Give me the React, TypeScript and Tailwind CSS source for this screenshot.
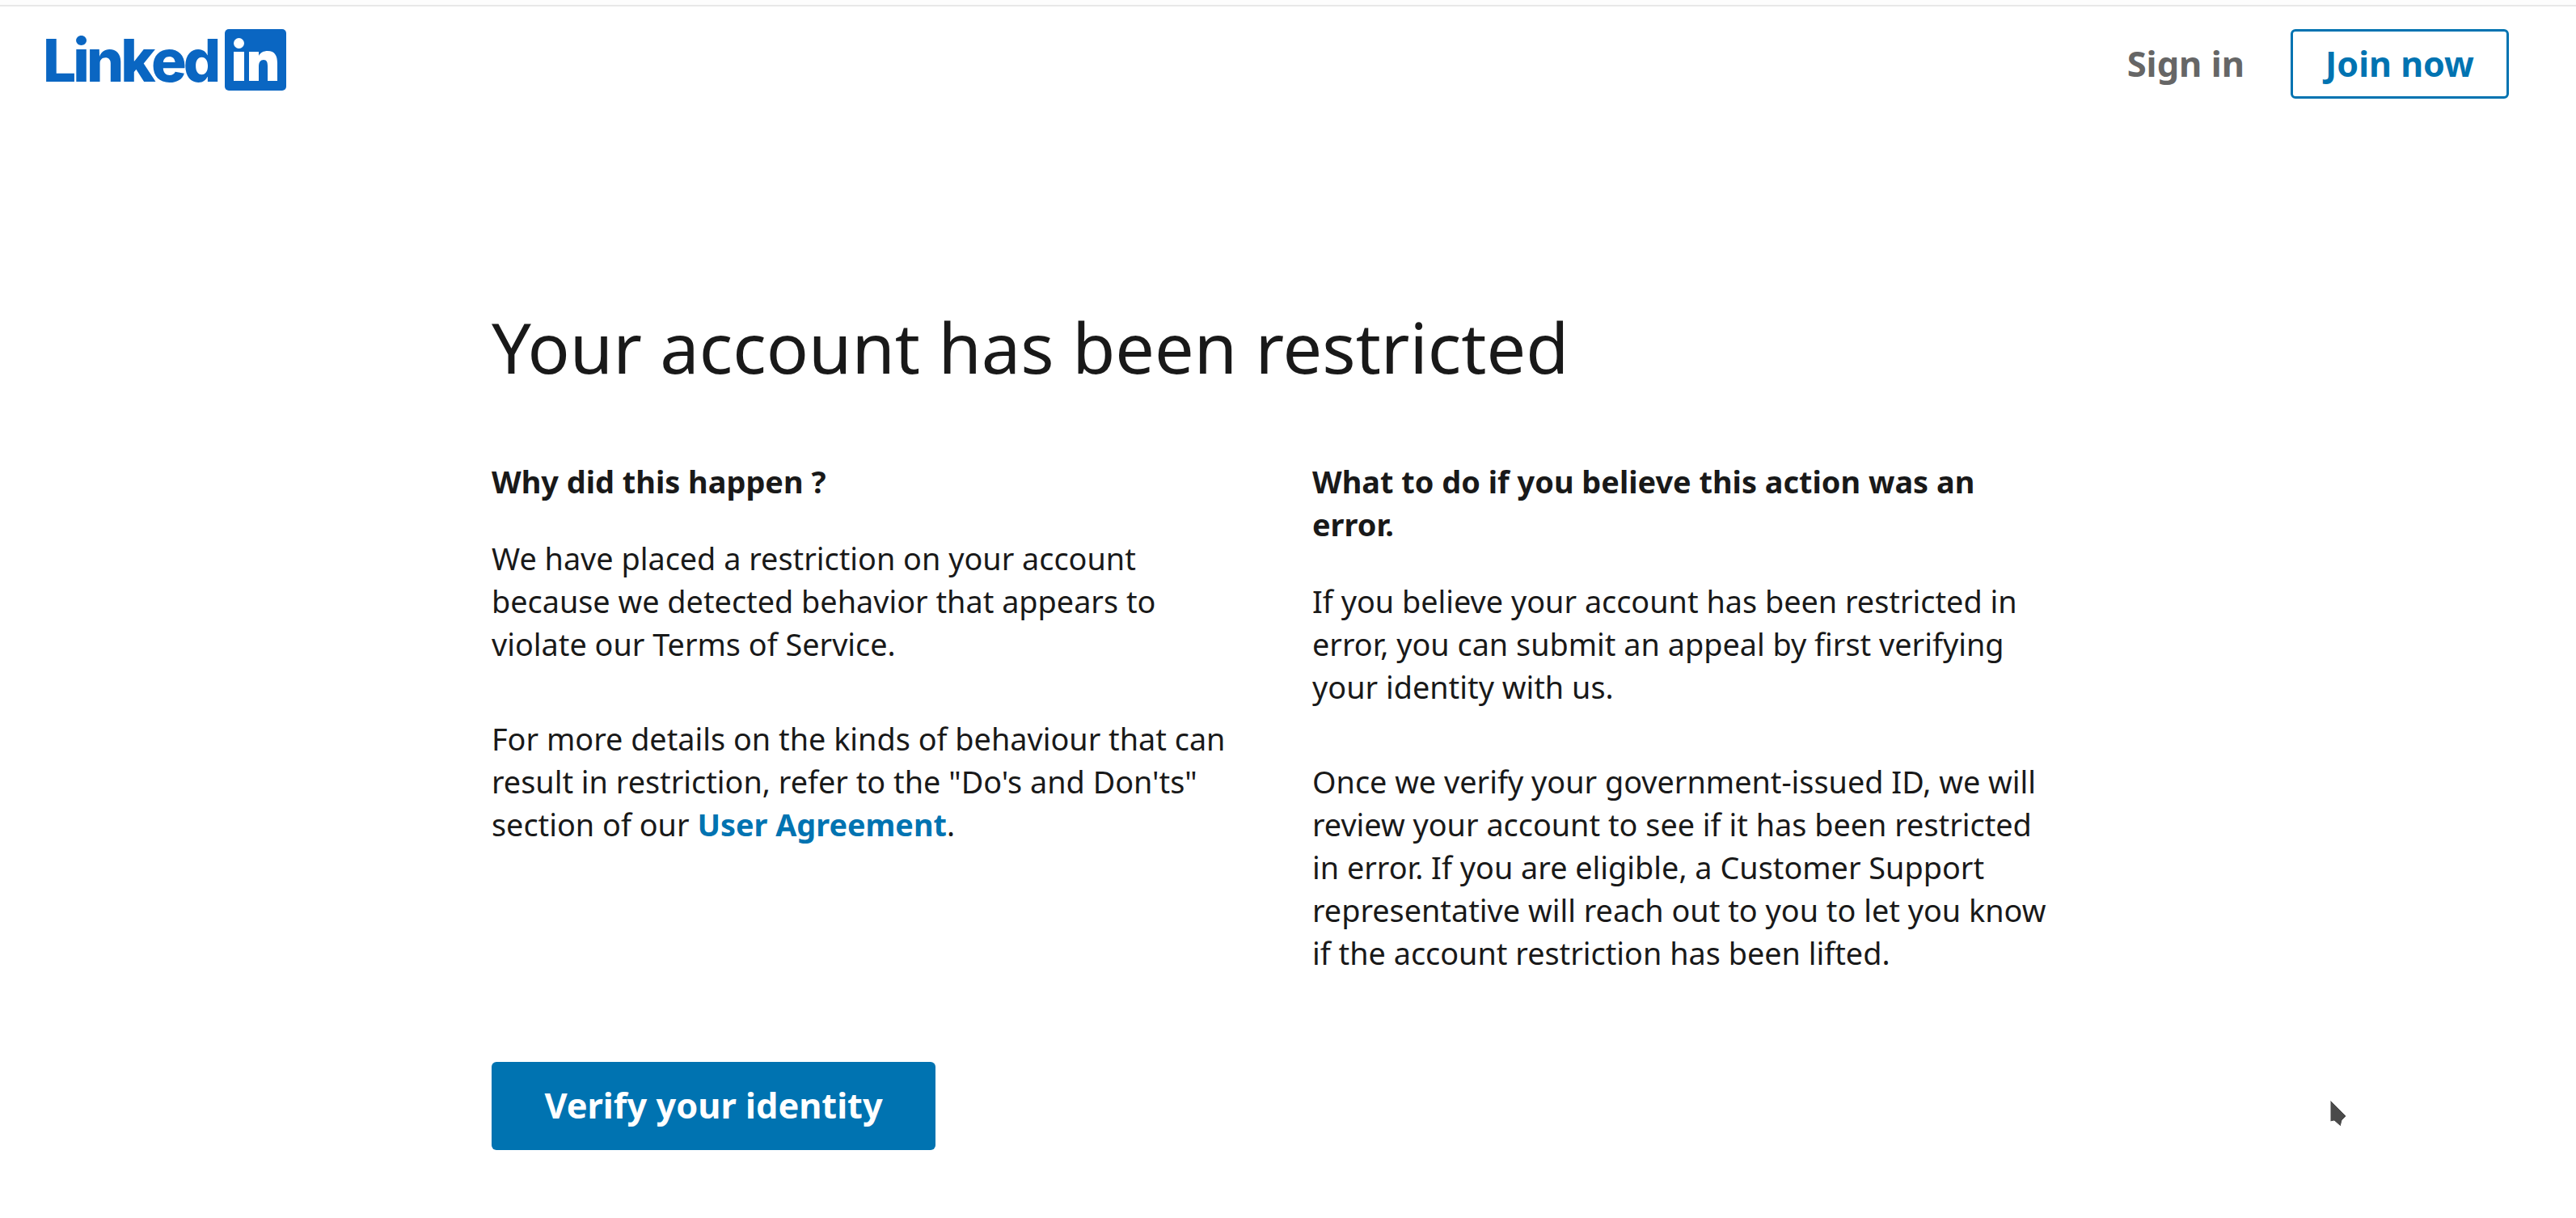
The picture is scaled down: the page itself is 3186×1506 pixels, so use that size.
const font = "font-['Noto_Sans','Open_Sans',sans-serif]";

function Logo() {
  return (
    <div className="flex items-center">
      <span className="font-['Inter',sans-serif] text-[73px] leading-[75px] font-extrabold tracking-[-4px] text-[#0a66c2]">
        Linked
      </span>
      <svg viewBox="0 0 76 76" className="ml-[9px] h-[76px] w-[76px]">
        <rect width="76" height="76" rx="5" fill="#0a66c2" />
        <rect x="11" y="28" width="13" height="36" fill="#fff" />
        <circle cx="17.5" cy="17.5" r="6.5" fill="#fff" />
        <path
          d="M30 28h12v5c2-4 6-6 11-6 9 0 12 6 12 15v22H53V46c0-5-1-8-5-8s-6 3-6 8v18H30z"
          fill="#fff"
        />
      </svg>
    </div>
  );
}

function Cursor() {
  return (
    <svg viewBox="0 0 28 42" className="absolute left-[2878px] top-[1356px] h-[42px] w-[28px]">
      <path d="M4 4L24 24L19 29L17 37L9 30L4 31z" fill="#4a4a4a" stroke="#fff" strokeWidth="1" />
    </svg>
  );
}

export default function App() {
  return (
    <div className={`relative min-h-[1506px] bg-white ${font} text-[#191919]`}>
      <div className="h-[8px] border-b-2 border-[#e8e8e8] bg-[#fdfdfd]" />
      <header className="flex items-start justify-between pl-[53px] pr-[83px] pt-[28px]">
        <Logo />
        <div className="flex items-center gap-[57px]">
          <a className="text-[43.5px] font-bold text-[#666666]">Sign in</a>
          <a className="flex h-[86px] w-[270px] items-center justify-center rounded-[6px] border-[3px] border-[#0073b1] text-[43px] font-bold text-[#0073b1]">
            Join now
          </a>
        </div>
      </header>
      <main className="pl-[608px] pt-[247px]">
        <h1 className="text-[86.4px] leading-[120px] font-normal">Your account has been restricted</h1>
        <div className="mt-[80px] grid w-[1940px] grid-cols-[925px_925px] gap-x-[90px] text-[37.8px] leading-[53px]">
          <section>
            <h2 className="text-[37.9px] font-bold">Why did this happen ?</h2>
            <p className="mt-[42px]">
              We have placed a restriction on your account because we detected behavior that appears to violate our Terms of Service.
            </p>
            <p className="mt-[64px]">
              For more details on the kinds of behaviour that can result in restriction, refer to the "Do's and Don'ts" section of our{" "}
              <a className="font-bold text-[#0073b1]">User Agreement</a>.
            </p>
          </section>
          <section>
            <h2 className="text-[37.9px] font-bold">What to do if you believe this action was an error.</h2>
            <p className="mt-[42px]">
              If you believe your account has been restricted in error, you can submit an appeal by first verifying your identity with us.
            </p>
            <p className="mt-[64px]">
              Once we verify your government-issued ID, we will review your account to see if it has been restricted in error. If you are eligible, a Customer Support representative will reach out to you to let you know if the account restriction has been lifted.
            </p>
          </section>
        </div>
        <button className="mt-[108px] h-[109px] w-[549px] rounded-[6px] bg-[#0073b1] text-[43.3px] font-bold text-white">
          Verify your identity
        </button>
      </main>
      <Cursor />
    </div>
  );
}
